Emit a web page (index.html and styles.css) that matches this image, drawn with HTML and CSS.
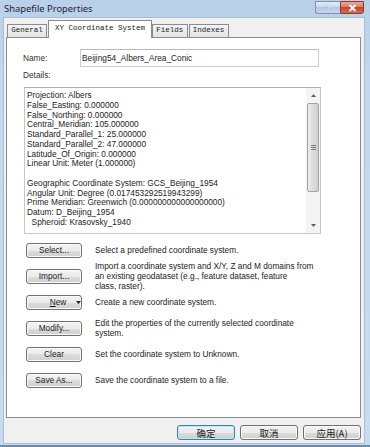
FILE: index.html
```html
<!DOCTYPE html>
<html lang="en">
    <head>
        <meta charset="UTF-8" />
        <title>Shapefile Properties</title>
        <link rel="stylesheet" href="styles.css">
    </head>
    <body>
        <div class="window">
            <div class="titlebar">
                <span class="title">Shapefile Properties</span>
                <div class="caption-buttons">
                    <span class="cap-btn help">?</span>
                    <span class="cap-btn close">
                        <svg width="9" height="8" viewBox="0 0 9 8"><path d="M1.5 1l6 6M7.5 1l-6 6" stroke="#fff" stroke-width="1.8"/></svg>
                    </span>
                </div>
            </div>
            <div class="dialog">
                <div class="tabs">
                    <span class="tab">General</span>
                    <span class="tab active">XY Coordinate System</span>
                    <span class="tab">Fields</span>
                    <span class="tab">Indexes</span>
                </div>
                <div class="panel">
                    <div class="name-row">
                        <label class="name-label">Name:</label>
                        <div class="field">Beijing54_Albers_Area_Conic</div>
                    </div>
                    <div class="details-label">Details:</div>
                    <div class="details">
                        <div class="details-text">Projection: Albers
False_Easting: 0.000000
False_Northing: 0.000000
Central_Meridian: 105.000000
Standard_Parallel_1: 25.000000
Standard_Parallel_2: 47.000000
Latitude_Of_Origin: 0.000000
Linear Unit: Meter (1.000000)

Geographic Coordinate System: GCS_Beijing_1954
Angular Unit: Degree (0.017453292519943299)
Prime Meridian: Greenwich (0.000000000000000000)
Datum: D_Beijing_1954
  Spheroid: Krasovsky_1940</div>
                        <div class="scrollbar">
                            <div class="arrow">
                                <svg width="5" height="3" viewBox="0 0 5 3"><path d="M0 3L2.5 0L5 3z" fill="#4d6185"/></svg>
                            </div>
                            <div class="track">
                                <div class="thumb">
                                    <span class="grip"></span>
                                </div>
                            </div>
                            <div class="arrow">
                                <svg width="5" height="3" viewBox="0 0 5 3"><path d="M0 0L2.5 3L5 0z" fill="#4d6185"/></svg>
                            </div>
                        </div>
                    </div>
                    <div class="actions">
                        <button class="btn">Select...</button>
                        <p class="desc">Select a predefined coordinate system.</p>
                        <button class="btn">Import...</button>
                        <p class="desc">Import a coordinate system and X/Y, Z and M domains from<br>an existing geodataset (e.g., feature dataset, feature<br>class, raster).</p>
                        <button class="btn btn-new"><span class="btn-label"><u>N</u>ew</span><span class="drop">
                            <svg width="5" height="3" viewBox="0 0 5 3"><path d="M0 0L2.5 3L5 0z" fill="#222"/></svg>
                        </span></button>
                        <p class="desc">Create a new coordinate system.</p>
                        <button class="btn">Modify...</button>
                        <p class="desc">Edit the properties of the currently selected coordinate<br>system.</p>
                        <button class="btn">Clear</button>
                        <p class="desc">Set the coordinate system to Unknown.</p>
                        <button class="btn">Save As...</button>
                        <p class="desc">Save the coordinate system to a file.</p>
                    </div>
                </div>
                <div class="footer">
                    <button class="btn dlg-btn default">确定</button>
                    <button class="btn dlg-btn">取消</button>
                    <button class="btn dlg-btn">应用(A)</button>
                </div>
            </div>
        </div>
    </body>
</html>
```

FILE: styles.css
```css
* {
    margin: 0;
    padding: 0;
    box-sizing: border-box;
}
body {
    font-family: "Liberation Sans", Arial, sans-serif;
    font-size: 8.3px;
    color: #222;
    background: #c3d7ec;
}
.window {
    display: flex;
    flex-direction: column;
    width: 370px;
    height: 447px;
    background: linear-gradient(#b8d0e9, #c3d8ee 80px, #c8dcf0);
    border-bottom: 2px solid #6f8aa6;
}
.titlebar {
    display: flex;
    align-items: flex-start;
    height: 18px;
    padding: 0 6px 0 4px;
}
.title {
    font-family: "Noto Sans", sans-serif;
    font-size: 9.4px;
    line-height: 18px;
    color: #1e2630;
}
.caption-buttons {
    display: flex;
    margin-left: auto;
    padding-top: 1px;
}
.cap-btn {
    display: flex;
    align-items: center;
    justify-content: center;
    height: 13px;
    border: 1px solid #7d93ad;
}
.help {
    width: 25px;
    border-radius: 0 0 0 3px;
    border-right: none;
    background: linear-gradient(#e3ecf6, #cbdaeb 45%, #b3c9e1 50%, #c4d8ee);
    font-family: "Liberation Sans", sans-serif;
    font-size: 9px;
    font-weight: bold;
    color: #f4f8fc;
    text-shadow: 0 0 1px #5a7594;
}
.close {
    width: 24px;
    border-color: #8e3b2f;
    border-radius: 0 0 3px 0;
    background: linear-gradient(#e9a99b, #d97a66 45%, #c8432f 50%, #d66c52);
}
.dialog {
    flex: 1;
    display: flex;
    flex-direction: column;
    margin: 0 6px 2px 4px;
    padding: 3px 3px 3px 2px;
    background: #f0f0f0;
    box-shadow: 0 0 0 1px #a9bdd3;
}
.tabs {
    display: flex;
    align-items: flex-end;
    height: 16px;
    padding-left: 1px;
}
.tab {
    height: 13px;
    padding: 0 3.25px;
    border: 1px solid #898c95;
    border-bottom: none;
    background: linear-gradient(#f3f3f3, #e4e4e4);
    font-family: "Liberation Mono", monospace;
    font-size: 7.5px;
    line-height: 11px;
    color: #222;
    white-space: pre;
}
.tab + .tab {
    margin-left: 1px;
}
.tab.active {
    position: relative;
    z-index: 1;
    height: 18px;
    margin-bottom: -1px;
    padding: 0 6px;
    background: #fff;
    line-height: 14px;
}
.active + .tab {
    margin-left: 0;
}
.panel {
    flex: 1;
    padding: 11px 0 0 16px;
    border: 1px solid #898c95;
    background: #fff;
}
.name-row {
    display: flex;
    align-items: center;
    height: 18px;
}
.name-label {
    width: 57px;
    color: #333;
}
.field {
    width: 239px;
    height: 18px;
    padding-left: 1px;
    border: 1px solid #c9ccd3;
    border-top-color: #b5b9c1;
    line-height: 16px;
}
.details-label {
    margin-top: 3px;
    line-height: 10px;
    color: #333;
}
.details {
    display: flex;
    width: 297px;
    height: 147px;
    margin: 7px 0 0 1px;
    border: 1px solid #c4c6cc;
    border-top-color: #abadb3;
}
.details-text {
    flex: 1;
    padding: 3px 0 0 2px;
    overflow: hidden;
    white-space: pre;
    line-height: 9.77px;
}
.scrollbar {
    display: flex;
    flex-direction: column;
    width: 14px;
    background: #f4f4f4;
}
.arrow {
    display: flex;
    align-items: center;
    justify-content: center;
    height: 15px;
}
.track {
    flex: 1;
}
.thumb {
    display: flex;
    align-items: center;
    justify-content: center;
    height: 89px;
    margin: 0 1px;
    border: 1px solid #a0a4aa;
    border-radius: 2px;
    background: linear-gradient(90deg, #ececec, #dcdcdc 50%, #cfcfcf);
}
.grip {
    width: 5px;
    height: 5px;
    border-top: 1px solid #7c7c7c;
    border-bottom: 1px solid #7c7c7c;
    background: linear-gradient(#7c7c7c, #7c7c7c) center / 100% 1px no-repeat;
}
.actions {
    display: grid;
    grid-template-columns: 56px 1fr;
    grid-auto-rows: 26px;
    align-items: center;
    column-gap: 13px;
    margin: 3px 0 0 3px;
}
.btn {
    display: flex;
    align-items: center;
    justify-content: center;
    height: 15px;
    border: 1px solid #707070;
    border-radius: 3px;
    background: linear-gradient(#f2f2f2, #ebebeb 50%, #dddddd 50%, #cfcfcf);
    box-shadow: inset 0 0 0 1px #fbfbfb;
    font: inherit;
    color: #1b1b1b;
}
.btn-new {
    justify-content: flex-start;
    padding-left: 19px;
}
.btn-label {
    width: 26px;
}
.drop {
    display: flex;
    padding-left: 6px;
}
.desc {
    line-height: 10px;
}
.footer {
    display: flex;
    justify-content: flex-end;
    gap: 5px;
    margin-top: 7px;
}
.dlg-btn {
    width: 58px;
    font-family: "Noto Sans CJK SC", sans-serif;
    font-size: 9.5px;
}
.default {
    border-color: #3c7fb1;
    box-shadow: inset 0 0 0 1px #bfe6f9;
}
```
